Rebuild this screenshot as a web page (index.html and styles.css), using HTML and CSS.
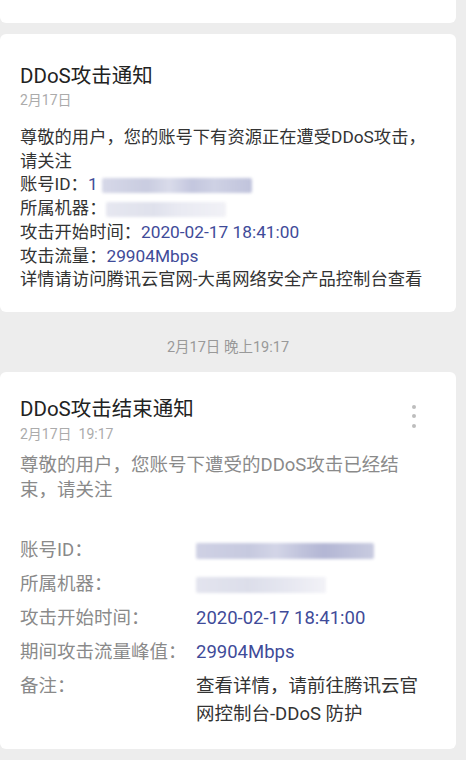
FILE: index.html
```html
<!DOCTYPE html>
<html lang="zh-CN">
<head>
<meta charset="utf-8">
<title>DDoS通知</title>
<link rel="stylesheet" href="styles.css">
</head>
<body>
<div class="page">
  <div class="card card-top"></div>

  <div class="card card-alert">
    <div class="title">DDoS攻击通知</div>
    <div class="date">2月17日</div>
    <div class="body">
      尊敬的用户，您的账号下有资源正在遭受DDoS攻击，<br>请关注<br>
      账号ID：<span class="val">1</span><span class="blur blur-a"></span><br>
      所属机器：<span class="blur blur-b"></span><br>
      攻击开始时间：<span class="val">2020-02-17 18:41:00</span><br>
      攻击流量：<span class="val">29904Mbps</span><br>
      详情请访问腾讯云官网-大禹网络安全产品控制台查看
    </div>
  </div>

  <div class="stamp">2月17日 晚上19:17</div>

  <div class="card card-end">
    <div class="menu"><i></i><i></i><i></i></div>
    <div class="title">DDoS攻击结束通知</div>
    <div class="date">2月17日&nbsp;&nbsp;19:17</div>
    <div class="lead">尊敬的用户，您账号下遭受的DDoS攻击已经结<br>束，请关注</div>
    <div class="rows">
      <div class="label">账号ID：</div>
      <div class="value"><span class="blur blur-c"></span></div>
      <div class="label">所属机器：</div>
      <div class="value"><span class="blur blur-d"></span></div>
      <div class="label">攻击开始时间：</div>
      <div class="value val">2020-02-17 18:41:00</div>
      <div class="label">期间攻击流量峰值：</div>
      <div class="value val">29904Mbps</div>
      <div class="label">备注：</div>
      <div class="value">查看详情，请前往腾讯云官<br>网控制台-DDoS 防护</div>
    </div>
  </div>
</div>
</body>
</html>
```

FILE: styles.css
```css
html, body {
  margin: 0;
  padding: 0;
  background: #ededed;
}
body {
  font-family: Roboto, "Noto Sans CJK SC", sans-serif;
  color: #333;
}
.page {
  display: flex;
  flex-direction: column;
  width: 456px;
}
.card {
  background: #fff;
  border-radius: 6px;
  position: relative;
}
.card-top {
  height: 23px;
  border-radius: 0 0 6px 6px;
}
.card-alert {
  margin-top: 11px;
  padding: 28px 20px 20px 20px;
}
.title {
  font-size: 20.5px;
  line-height: 28px;
  color: #222;
}
.date {
  font-size: 14px;
  line-height: 20px;
  color: #ababab;
}
.card-alert .body {
  margin-top: 16px;
  font-size: 17.3px;
  line-height: 23.7px;
  color: #333;
  white-space: nowrap;
}
.val {
  color: #3f4b99;
}
.blur {
  display: inline-block;
  vertical-align: middle;
  height: 15px;
  filter: blur(1.5px);
  border-radius: 2px;
}
.blur-a {
  width: 150px;
  margin-left: 4px;
  background: linear-gradient(90deg, #d6d8e8 0%, #c9cce0 30%, #d9dbea 45%, #c3c6de 60%, #ced1e4 75%, #c0c3dc 100%);
}
.blur-b {
  width: 120px;
  background: linear-gradient(90deg, #e6e7f0 0%, #dfe1ec 40%, #e9eaf2 60%, #f1f1f6 100%);
}
.stamp {
  margin-top: 26px;
  text-align: center;
  font-size: 14.5px;
  line-height: 20px;
  color: #999;
}
.card-end {
  margin-top: 14px;
  padding: 23px 20px 21px 20px;
}
.menu {
  position: absolute;
  top: 33px;
  right: 40px;
  display: flex;
  flex-direction: column;
  gap: 5.5px;
}
.menu i {
  display: block;
  width: 4px;
  height: 4px;
  border-radius: 50%;
  background: #bdbdbd;
}
.card-end .date {
  margin-top: 1px;
}
.lead {
  margin-top: 9px;
  font-size: 18.5px;
  line-height: 25px;
  color: #8a8a8a;
  white-space: nowrap;
}
.rows {
  margin-top: 33px;
  display: grid;
  grid-template-columns: 176px 1fr;
  row-gap: 6px;
  font-size: 18.5px;
  line-height: 28px;
}
.label {
  color: #8a8a8a;
}
.value {
  color: #333;
  white-space: nowrap;
}
.value.val {
  color: #3f4b99;
}
.blur-c {
  width: 178px;
  height: 16px;
  background: linear-gradient(90deg, #cfd1e4 0%, #c6c9df 30%, #d3d5e7 45%, #bfc2db 60%, #b3b6d4 72%, #c8cbe0 100%);
}
.blur-d {
  width: 130px;
  height: 16px;
  background: linear-gradient(90deg, #e3e4ee 0%, #dcdeea 40%, #e6e7f0 70%, #f2f2f7 100%);
}
```
